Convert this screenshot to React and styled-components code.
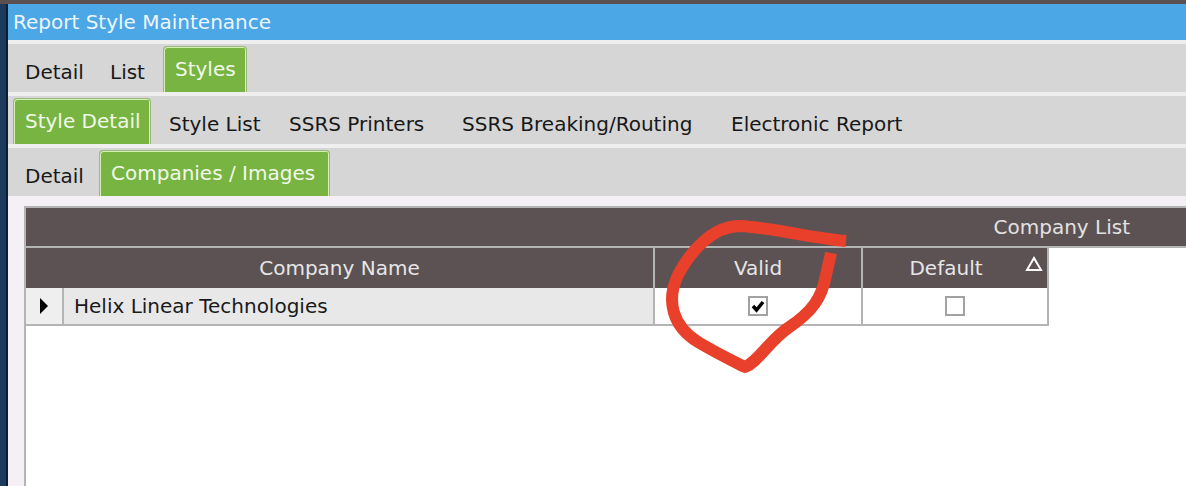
import React from "react"
import styled, { createGlobalStyle } from "styled-components"

const GlobalStyle = createGlobalStyle`
  html, body {
    margin: 0;
    padding: 0;
    background: #f4f0f6;
  }
  body {
    font-family: "DejaVu Sans", Verdana, sans-serif;
    font-size: 20px;
  }
`

const tabRows = [
  [
    { label: "Detail", width: 85 },
    { label: "List", width: 59 },
    { label: "Styles", width: 84, active: true },
  ],
  [
    { label: "Style Detail", width: 138, active: true },
    { label: "Style List", width: 120 },
    { label: "SSRS Printers", width: 173 },
    { label: "SSRS Breaking/Routing", width: 269 },
    { label: "Electronic Report", width: 240 },
  ],
  [
    { label: "Detail", width: 80 },
    { label: "Companies / Images", width: 231, active: true },
  ],
]

const App = () => {
  return (
    <Screen>
      <GlobalStyle />
      <SideStrip />
      <Window>
        <TitleBar>Report Style Maintenance</TitleBar>
        {tabRows.map((row, i) => (
          <TabRow key={i}>
            {row.map(tab => (
              <Tab key={tab.label} $active={tab.active} $w={tab.width}>
                {tab.label}
              </Tab>
            ))}
          </TabRow>
        ))}
        <Content>
          <Panel>
            <Caption>Company List</Caption>
            <HeaderRow>
              <HeadCell $w={629}>Company Name</HeadCell>
              <HeadCell $w={208}>Valid</HeadCell>
              <HeadCell $w={186} $sorted>
                Default
                <SortMark width="18" height="16" viewBox="0 0 18 16">
                  <polygon
                    points="9,2 16,14 2,14"
                    fill="none"
                    stroke="#ffffff"
                    strokeWidth="2"
                  />
                </SortMark>
              </HeadCell>
            </HeaderRow>
            <DataRow>
              <Selector>
                <svg width="10" height="16" viewBox="0 0 10 16">
                  <polygon points="1,0 9,8 1,16" fill="#000" />
                </svg>
              </Selector>
              <NameCell>Helix Linear Technologies</NameCell>
              <CheckCell $w={208}>
                <Box>
                  <svg width="14" height="14" viewBox="0 0 14 14">
                    <path
                      d="M2 7 L5.5 11 L12 3"
                      fill="none"
                      stroke="#000"
                      strokeWidth="3.5"
                    />
                  </svg>
                </Box>
              </CheckCell>
              <CheckCell $w={186}>
                <Box />
              </CheckCell>
            </DataRow>
          </Panel>
        </Content>
      </Window>
      <Scribble viewBox="0 0 1186 486" width="1186" height="486">
        <path
          d="M846 241 C 810 238, 775 228, 740 226 C 712 226, 690 252, 678 275 C 666 300, 672 326, 698 342 C 718 354, 735 362, 745 367 C 758 362, 768 342, 788 328 C 812 312, 822 298, 826 275 C 829 262, 830 258, 831 253"
          fill="none"
          stroke="#e8402a"
          strokeWidth="12"
          strokeLinecap="butt"
          strokeLinejoin="round"
        />
      </Scribble>
    </Screen>
  )
}

const Screen = styled.div`
  position: relative;
  display: flex;
  width: 1186px;
  height: 486px;
  overflow: hidden;
  border-top: 4px solid #5a5052;
  box-sizing: border-box;
`

const SideStrip = styled.div`
  width: 6px;
  flex-shrink: 0;
  background: #1b3a5c;
  border-right: 2px solid #0e1d30;
`

const Window = styled.div`
  flex: 1;
  display: flex;
  flex-direction: column;
  background: #efefef;
  min-width: 0;
`

const TitleBar = styled.div`
  height: 36px;
  flex-shrink: 0;
  display: flex;
  align-items: center;
  padding-left: 5px;
  background: #4ba7e6;
  color: #eef5fc;
  white-space: nowrap;
`

const TabRow = styled.div`
  height: 48px;
  flex-shrink: 0;
  margin-top: 4px;
  display: flex;
  align-items: flex-start;
  padding-left: 5px;
  background: #d6d6d6;
`

const Tab = styled.div`
  width: ${p => p.$w}px;
  flex-shrink: 0;
  box-sizing: border-box;
  display: flex;
  align-items: center;
  padding-left: 12px;
  white-space: nowrap;
  color: #181818;
  height: 48px;
  padding-top: 8px;

  ${p =>
    p.$active &&
    `
    margin: 2px 6px 0;
    height: 46px;
    padding-top: 0;
    padding-bottom: 2px;
    padding-left: 11px;
    background: #77b441;
    color: #f2f9ea;
    border: 1px solid #9bb97c;
    border-bottom: none;
    border-radius: 4px 4px 0 0;
    box-shadow: inset 1px 1px 0 #d6efb6, inset -1px 0 0 #d6efb6;
    &:first-child { margin-left: 0; }
  `}
`

const Content = styled.div`
  flex: 1;
  display: flex;
  background: #f4f0f6;
  padding: 10px 0 0 16px;
`

const Panel = styled.div`
  flex: 1;
  background: #ffffff;
  border-left: 2px solid #b4b4b4;
  border-top: 2px solid #b4b4b4;
`

const Caption = styled.div`
  height: 38px;
  display: flex;
  align-items: center;
  justify-content: flex-end;
  padding-right: 56px;
  background: #5c5254;
  color: #e2e2e2;
  border-bottom: 2px solid #b4b4b4;
`

const HeaderRow = styled.div`
  display: flex;
  height: 40px;
`

const HeadCell = styled.div`
  position: relative;
  width: ${p => p.$w}px;
  box-sizing: border-box;
  display: flex;
  align-items: center;
  justify-content: center;
  padding-right: ${p => (p.$sorted ? 18 : 0)}px;
  background: #5c5254;
  color: #e6e6e6;
  border-right: 2px solid #b4b4b4;
`

const SortMark = styled.svg`
  position: absolute;
  right: 4px;
  top: 8px;
`

const DataRow = styled.div`
  display: flex;
  height: 38px;
`

const Selector = styled.div`
  width: 38px;
  box-sizing: border-box;
  display: flex;
  align-items: center;
  justify-content: center;
  background: #efefef;
  border-right: 2px solid #b4b4b4;
  border-bottom: 2px solid #b4b4b4;
`

const NameCell = styled.div`
  width: 591px;
  box-sizing: border-box;
  display: flex;
  align-items: center;
  padding-left: 10px;
  background: #e8e8e8;
  color: #1a1a1a;
  white-space: nowrap;
  border-right: 2px solid #b4b4b4;
  border-bottom: 2px solid #b4b4b4;
`

const CheckCell = styled.div`
  width: ${p => p.$w}px;
  box-sizing: border-box;
  display: flex;
  align-items: center;
  justify-content: center;
  background: #ffffff;
  border-right: 2px solid #b4b4b4;
  border-bottom: 2px solid #b4b4b4;
`

const Box = styled.div`
  width: 20px;
  height: 20px;
  box-sizing: border-box;
  border: 2px solid #a2a2a2;
  background: #ffffff;
  display: flex;
  align-items: center;
  justify-content: center;
`

const Scribble = styled.svg`
  position: absolute;
  left: 0;
  top: -4px;
  pointer-events: none;
`

export default App
